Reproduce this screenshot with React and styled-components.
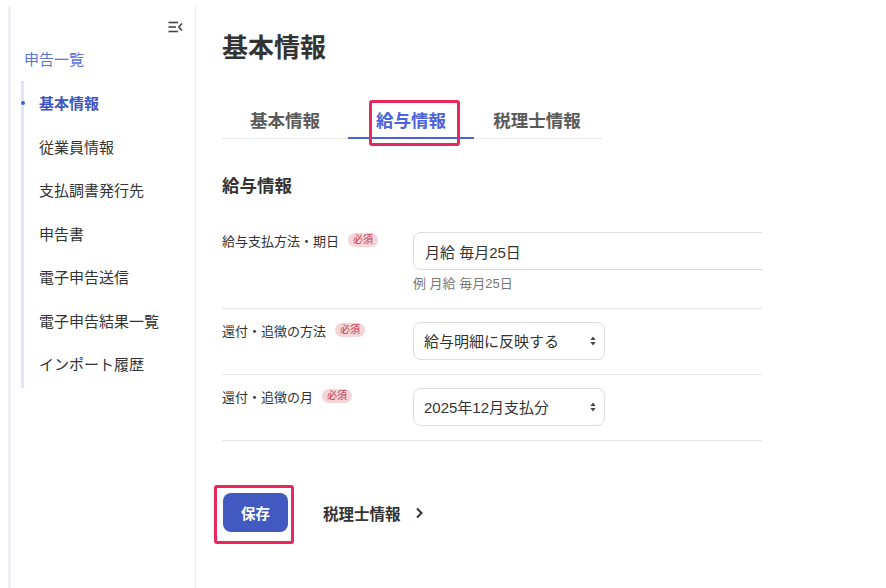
import React from 'react';
import styled, { createGlobalStyle } from 'styled-components';

const navItems = ['基本情報', '従業員情報', '支払調書発行先', '申告書', '電子申告送信', '電子申告結果一覧', 'インポート履歴'];
const tabs = ['基本情報', '給与情報', '税理士情報'];

const GlobalStyle = createGlobalStyle`
  html, body { margin: 0; padding: 0; background: #fff; }
  body {
    font-family: "Liberation Sans", "Noto Sans CJK JP", sans-serif;
    color: #333;
  }
`;

// --- icons ---
const CollapseIcon = () => (
  <svg width="15" height="12" viewBox="0 0 15 12" fill="none" stroke="#444" strokeWidth="1.6">
    <line x1="0.5" y1="1.5" x2="10" y2="1.5" />
    <line x1="0.5" y1="6" x2="8" y2="6" />
    <line x1="0.5" y1="10.5" x2="10" y2="10.5" />
    <polyline points="14,2.5 10.8,6 14,9.5" strokeLinejoin="miter" />
  </svg>
);

const ChevronRight = () => (
  <svg width="10" height="12" viewBox="0 0 10 12" fill="none" stroke="#333" strokeWidth="2">
    <polyline points="3,1.5 7.5,6 3,10.5" />
  </svg>
);

const SelectArrows = () => (
  <svg width="6" height="10" viewBox="0 0 6 10" fill="#444">
    <polygon points="3,0.5 5.6,4 0.4,4" />
    <polygon points="3,9.5 5.6,6 0.4,6" />
  </svg>
);

export default function App() {
  return (
    <>
      <GlobalStyle />
      <Page>
        <Sidebar>
          <SidebarTop>
            <CollapseButton><CollapseIcon /></CollapseButton>
          </SidebarTop>
          <SidebarHeading>申告一覧</SidebarHeading>
          <NavList>
            {navItems.map((item, i) => (
              <NavItem key={item} $active={i === 0}>{item}</NavItem>
            ))}
          </NavList>
        </Sidebar>

        <Main>
          <Title>基本情報</Title>
          <TabBar>
            {tabs.map((t, i) => (
              <Tab key={t} $active={i === 1}>
                {t}
                {i === 1 && <TabHighlight />}
              </Tab>
            ))}
          </TabBar>

          <SectionTitle>給与情報</SectionTitle>
          <Form>
            <Row>
              <Label>給与支払方法・期日<Required>必須</Required></Label>
              <Field>
                <TextInput defaultValue="月給 毎月25日" />
                <Hint>例 月給 毎月25日</Hint>
              </Field>
            </Row>
            <Row>
              <Label>還付・追徴の方法<Required>必須</Required></Label>
              <Field>
                <SelectWrap>
                  <Select defaultValue="a">
                    <option value="a">給与明細に反映する</option>
                  </Select>
                  <ArrowSlot><SelectArrows /></ArrowSlot>
                </SelectWrap>
              </Field>
            </Row>
            <Row>
              <Label>還付・追徴の月<Required>必須</Required></Label>
              <Field>
                <SelectWrap>
                  <Select defaultValue="a">
                    <option value="a">2025年12月支払分</option>
                  </Select>
                  <ArrowSlot><SelectArrows /></ArrowSlot>
                </SelectWrap>
              </Field>
            </Row>
          </Form>

          <Actions>
            <SaveButton>
              保存
              <ButtonHighlight />
            </SaveButton>
            <NextLink>税理士情報 <ChevronRight /></NextLink>
          </Actions>
        </Main>
      </Page>
    </>
  );
}

// --- styles ---
const Page = styled.div`
  display: flex;
  min-height: 588px;
`;

const Sidebar = styled.aside`
  width: 184px;
  margin: 6px 0 0 8px;
  border-left: 3px solid #eef0f6;
  border-right: 1px solid #ececec;
  background: #fff;
  display: flex;
  flex-direction: column;
`;

const SidebarTop = styled.div`
  display: flex;
  justify-content: flex-end;
  padding: 11px 12px 0 0;
  height: 20px;
`;

const CollapseButton = styled.div`
  display: flex;
  align-items: center;
`;

const SidebarHeading = styled.div`
  margin: 12px 0 0 13px;
  font-size: 15px;
  line-height: 22px;
  color: #5b73dc;
`;

const NavList = styled.ul`
  list-style: none;
  margin: 10px 0 0 10px;
  padding: 0;
  border-left: 3px solid #dde5fb;
  width: 160px;
  padding-bottom: 2px;
`;

const NavItem = styled.li`
  position: relative;
  height: 43.5px;
  display: flex;
  align-items: center;
  padding-left: 15px;
  font-size: 15px;
  font-weight: ${({ $active }) => ($active ? 700 : 400)};
  color: ${({ $active }) => ($active ? '#3e54c2' : '#333')};

  &::before {
    content: '';
    display: ${({ $active }) => ($active ? 'block' : 'none')};
    position: absolute;
    left: -3.5px;
    top: 50%;
    width: 4px;
    height: 4px;
    margin-top: -2px;
    border-radius: 50%;
    background: #4a5fd0;
  }
`;

const Main = styled.main`
  flex: 1;
  padding: 30px 0 0 26px;
`;

const Title = styled.h1`
  margin: 0;
  font-size: 26px;
  line-height: 36px;
  font-weight: 700;
  color: #333;
`;

const TabBar = styled.div`
  display: flex;
  width: 380px;
  margin-top: 34px;
  border-bottom: 1px solid #e8e8e8;
`;

const Tab = styled.div`
  position: relative;
  width: 126px;
  height: 39px;
  display: flex;
  align-items: center;
  justify-content: center;
  font-size: 17.5px;
  font-weight: 700;
  color: ${({ $active }) => ($active ? '#4a62dc' : '#5a5a5a')};
  box-shadow: ${({ $active }) => ($active ? 'inset 0 -2px 0 #4a62dc' : 'none')};
  margin-bottom: -1px;
`;

const TabHighlight = styled.span`
  position: absolute;
  left: 21px;
  top: 0;
  width: 85px;
  height: 40px;
  border: 3px solid #e8275c;
  border-radius: 3px;
`;

const SectionTitle = styled.h2`
  margin: 35px 0 0;
  font-size: 17.5px;
  line-height: 24px;
  font-weight: 700;
  color: #333;
`;

const Form = styled.div`
  width: 540px;
  margin-top: 18px;
  overflow: hidden;
`;

const Row = styled.div`
  display: flex;
  align-items: flex-start;
  padding: 16px 0 15px;
  border-bottom: 1px solid #e6e6e6;

  & + & { padding: 13px 0 14px; }
`;

const Label = styled.div`
  width: 191px;
  flex-shrink: 0;
  display: flex;
  align-items: center;
  font-size: 13px;
  line-height: 20px;
  color: #333;
`;

const Required = styled.span`
  margin-left: 9px;
  padding: 0 5px;
  height: 14px;
  line-height: 14px;
  border-radius: 7px;
  background: #f6d5d9;
  color: #c23a4f;
  font-size: 10px;
  margin-top: -4px;
`;

const Field = styled.div`
  display: flex;
  flex-direction: column;
`;

const TextInput = styled.input`
  box-sizing: border-box;
  width: 370px;
  height: 38px;
  padding: 0 11px;
  border: 1px solid #dcdcdc;
  border-radius: 8px;
  font: inherit;
  font-size: 15px;
  color: #333;
  outline: none;
`;

const Hint = styled.div`
  margin-top: 5px;
  font-size: 13px;
  line-height: 18px;
  color: #777;
`;

const SelectWrap = styled.div`
  position: relative;
  width: 192px;
`;

const Select = styled.select`
  box-sizing: border-box;
  width: 192px;
  height: 38px;
  padding: 0 24px 0 10px;
  border: 1px solid #dcdcdc;
  border-radius: 8px;
  background: #fff;
  font: inherit;
  font-size: 15px;
  color: #333;
  appearance: none;
  outline: none;
`;

const ArrowSlot = styled.span`
  position: absolute;
  right: 9px;
  top: 14px;
  display: flex;
  pointer-events: none;
`;

const Actions = styled.div`
  display: flex;
  align-items: center;
  margin-top: 52px;
  padding-left: 1px;
`;

const SaveButton = styled.button`
  position: relative;
  width: 65px;
  height: 39px;
  border: none;
  border-radius: 8px;
  background: #4159c1;
  color: #fff;
  font: inherit;
  font-size: 14.5px;
  font-weight: 700;
`;

const ButtonHighlight = styled.span`
  position: absolute;
  left: -9px;
  top: -8px;
  width: 74px;
  height: 53px;
  border: 3px solid #e8275c;
  border-radius: 3px;
`;

const NextLink = styled.div`
  display: flex;
  align-items: center;
  gap: 13px;
  margin-left: 35px;
  font-size: 15.5px;
  font-weight: 700;
  color: #333;
`;
